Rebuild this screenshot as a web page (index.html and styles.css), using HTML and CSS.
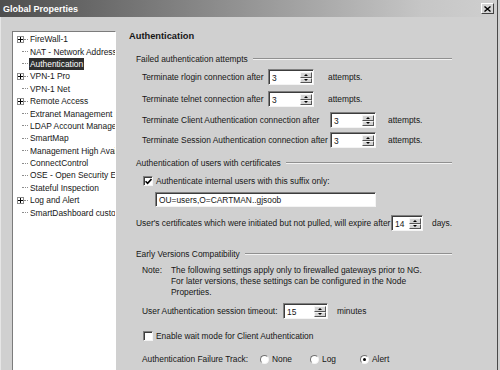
FILE: index.html
```html
<!DOCTYPE html>
<html lang="en">
<head>
  <meta charset="UTF-8">
  <meta name="viewport" content="width=device-width, initial-scale=1.0">
  <title>Global Properties</title>
  <link rel="stylesheet" href="styles.css">
</head>
<body>

  <div class="window">
    <div class="titlebar">
      <span class="title">Global Properties</span>
      <span class="close-btn">
        <svg width="7" height="6" viewBox="0 0 7 6"><path d="M0.5 0.5L6.5 5.5M6.5 0.5L0.5 5.5" stroke="#000" stroke-width="1.4"/></svg>
      </span>
    </div>

    <div class="dialog-body">
      <!-- Category tree -->
      <ul class="tree">
        <li><span class="twig"><span class="expander"></span></span><span class="node">FireWall-1</span></li>
        <li><span class="twig leaf"></span><span class="node">NAT - Network Address Translation</span></li>
        <li><span class="twig leaf"></span><span class="node selected">Authentication</span></li>
        <li><span class="twig"><span class="expander"></span></span><span class="node">VPN-1 Pro</span></li>
        <li><span class="twig leaf"></span><span class="node">VPN-1 Net</span></li>
        <li><span class="twig"><span class="expander"></span></span><span class="node">Remote Access</span></li>
        <li><span class="twig leaf"></span><span class="node">Extranet Management Interface</span></li>
        <li><span class="twig leaf"></span><span class="node">LDAP Account Management</span></li>
        <li><span class="twig leaf"></span><span class="node">SmartMap</span></li>
        <li><span class="twig leaf"></span><span class="node">Management High Availability</span></li>
        <li><span class="twig leaf"></span><span class="node">ConnectControl</span></li>
        <li><span class="twig leaf"></span><span class="node">OSE - Open Security Extension</span></li>
        <li><span class="twig leaf"></span><span class="node">Stateful Inspection</span></li>
        <li><span class="twig"><span class="expander"></span></span><span class="node">Log and Alert</span></li>
        <li><span class="twig leaf"></span><span class="node">SmartDashboard customization</span></li>
      </ul>

      <!-- Authentication page -->
      <div class="panel">
        <h1 class="page-title">Authentication</h1>

        <div class="group mt7">Failed authentication attempts</div>

        <div class="field-row mt2">
          <span class="lbl lbl-short">Terminate rlogin connection after</span>
          <span class="spin"><span class="val">3</span><span class="spin-btns"><span class="up"></span><span class="down"></span></span></span>
          <span class="unit">attempts.</span>
        </div>
        <div class="field-row mt6">
          <span class="lbl lbl-short">Terminate telnet connection after</span>
          <span class="spin"><span class="val">3</span><span class="spin-btns"><span class="up"></span><span class="down"></span></span></span>
          <span class="unit">attempts.</span>
        </div>
        <div class="field-row mt5">
          <span class="lbl lbl-long">Terminate Client Authentication connection after</span>
          <span class="spin"><span class="val">3</span><span class="spin-btns"><span class="up"></span><span class="down"></span></span></span>
          <span class="unit unit-near">attempts.</span>
        </div>
        <div class="field-row mt4">
          <span class="lbl lbl-long">Terminate Session Authentication connection after</span>
          <span class="spin"><span class="val">3</span><span class="spin-btns"><span class="up"></span><span class="down"></span></span></span>
          <span class="unit unit-near">attempts.</span>
        </div>

        <div class="group mt7">Authentication of users with certificates</div>

        <div class="field-row mt2">
          <span class="checkbox">
            <svg width="7" height="7" viewBox="0 0 7 7"><path d="M0.5 3.2L2.6 5.4L6.5 1" fill="none" stroke="#000" stroke-width="1.6"/></svg>
          </span>
          <span class="check-label">Authenticate internal users with this suffix only:</span>
        </div>
        <div class="text-row mt3">
          <span class="textbox">OU=users,O=CARTMAN..gjsoob</span>
        </div>
        <div class="field-row outdent mt8">
          <span class="lbl lbl-expire">User's certificates which were initiated but not pulled, will expire after</span>
          <span class="spin spin-small"><span class="val">14</span><span class="spin-btns"><span class="up"></span><span class="down"></span></span></span>
          <span class="unit unit-tight">days.</span>
        </div>

        <div class="group mt15">Early Versions Compatibility</div>

        <div class="note mt3">
          <span class="note-head">Note:</span>
          <span class="note-text">The following settings apply only to firewalled gateways prior to NG.<br>For later versions, these settings can be configured in the Node<br>Properties.</span>
        </div>

        <div class="field-row mt5">
          <span class="lbl lbl-timeout">User Authentication session timeout:</span>
          <span class="spin spin-timeout"><span class="val">15</span><span class="spin-btns"><span class="up"></span><span class="down"></span></span></span>
          <span class="unit unit-tight">minutes</span>
        </div>

        <div class="field-row mt9">
          <span class="checkbox"></span>
          <span class="check-label">Enable wait mode for Client Authentication</span>
        </div>

        <div class="field-row mt7">
          <span class="lbl lbl-track">Authentication Failure Track:</span>
          <span class="option"><span class="radio"></span>None</span>
          <span class="option"><span class="radio"></span>Log</span>
          <span class="option"><span class="radio checked"></span>Alert</span>
        </div>
      </div>
    </div>
  </div>

</body>
</html>
```

FILE: styles.css
```css
* {
  box-sizing: border-box;
}

body {
  margin: 0;
  background-color: #d0d0d0;
  font-family: "Liberation Sans", Arial, sans-serif;
  font-size: 8.4px;
  color: #161616;
}

.window {
  width: 498px;
  height: 370px;
  overflow: hidden;
  border-right: 1px solid #4a4a4a;
  background-color: #d0d0d0;
}

/* Title bar */
.titlebar {
  height: 17px;
  display: flex;
  align-items: center;
  justify-content: space-between;
  padding: 0 3px 0 3px;
  background: linear-gradient(to right, #4e4e4e 0%, #8e8e8e 45%, #c6c6c6 85%, #cfcfcf 100%);
}

.title {
  color: #fff;
  font-weight: bold;
  font-size: 9px;
}

.close-btn {
  width: 13px;
  height: 11px;
  display: flex;
  align-items: center;
  justify-content: center;
  background-color: #d4d4d4;
  border: 1px solid;
  border-color: #fff #404040 #404040 #fff;
}

.dialog-body {
  display: flex;
  border-left: 1px solid #e6e6e6;
}

/* Tree */
.tree {
  list-style: none;
  margin: 14px 0 0 11px;
  padding: 1px 0 0 0;
  width: 104px;
  height: 360px;
  background-color: #fff;
  border: 1px solid;
  border-color: #7c7c7c #fff #fff #7c7c7c;
  overflow: hidden;
  white-space: nowrap;
}

.tree li {
  display: flex;
  align-items: center;
  height: 12.4px;
}

.twig {
  display: flex;
  align-items: center;
  flex: none;
  width: 16px;
  height: 100%;
}

.twig::after {
  content: "";
  flex: 1;
  margin-right: 1px;
  border-top: 1px dotted #8c8c8c;
}

.twig.leaf::after {
  margin-left: 9px;
}

.expander {
  width: 7px;
  height: 7px;
  margin-left: 4px;
  border: 1px solid #8c8c8c;
  background:
    linear-gradient(#000, #000) center / 5px 1px no-repeat,
    linear-gradient(#000, #000) center / 1px 5px no-repeat,
    #fff;
}

.node {
  padding: 0 1px;
  line-height: 12px;
}

.node.selected {
  background-color: #2e2e2e;
  color: #fff;
}

/* Right panel */
.panel {
  margin-left: 13px;
  width: 323px;
  padding-top: 11px;
}

.page-title {
  margin: 0;
  height: 16px;
  display: flex;
  align-items: center;
  font-size: 9.3px;
  font-weight: bold;
}

.group {
  height: 16px;
  margin-left: 7px;
  display: flex;
  align-items: center;
}

.group::after {
  content: "";
  flex: 1;
  margin-left: 5px;
  border-top: 1px solid #909090;
  border-bottom: 1px solid #f2f2f2;
}

.field-row {
  height: 16px;
  margin-left: 13px;
  display: flex;
  align-items: center;
}

.field-row.outdent {
  margin-left: 7px;
}

.lbl {
  flex: none;
}

.lbl-short { width: 126px; }
.lbl-long { width: 188px; }
.lbl-expire { width: 255px; }
.lbl-timeout { width: 141px; }
.lbl-track { width: 118px; }

/* Spin box */
.spin {
  width: 46px;
  height: 16px;
  display: flex;
  align-items: stretch;
  background-color: #fff;
  border: 1px solid;
  border-color: #808080 #f4f4f4 #f4f4f4 #808080;
  box-shadow: inset 1px 1px 0 #3c3c3c;
  padding: 2px 1px 1px 2px;
}

.spin-small { width: 35px; }
.spin-timeout { width: 45px; }

.val {
  flex: 1;
  display: flex;
  align-items: center;
  padding-left: 1px;
}

.spin-btns {
  width: 12px;
  display: flex;
  flex-direction: column;
}

.up, .down {
  flex: 1;
  display: flex;
  align-items: center;
  justify-content: center;
  background-color: #d4d4d4;
  border: 1px solid;
  border-color: #f4f4f4 #555 #555 #f4f4f4;
}

.up::before, .down::before {
  content: "";
  border-left: 2px solid transparent;
  border-right: 2px solid transparent;
}

.up::before { border-bottom: 2px solid #000; }
.down::before { border-top: 2px solid #000; }

.unit {
  margin-left: 14px;
}

.unit-near { margin-left: 12px; }
.unit-tight { margin-left: 9px; }

/* Checkbox */
.checkbox {
  width: 10px;
  height: 10px;
  margin-left: 1px;
  margin-right: 3px;
  display: flex;
  align-items: center;
  justify-content: center;
  background-color: #fff;
  border: 1px solid;
  border-color: #808080 #f4f4f4 #f4f4f4 #808080;
  box-shadow: inset 1px 1px 0 #3c3c3c;
}

.text-row {
  margin-left: 26px;
  height: 15px;
  display: flex;
}

.textbox {
  width: 221px;
  height: 15px;
  display: flex;
  align-items: center;
  padding-left: 3px;
  background-color: #fff;
  border: 1px solid;
  border-color: #808080 #f4f4f4 #f4f4f4 #808080;
  box-shadow: inset 1px 1px 0 #3c3c3c;
}

/* Note */
.note {
  margin-left: 13px;
  display: flex;
  line-height: 11px;
}

.note-head {
  width: 29px;
  flex: none;
}

/* Radio options */
.option {
  width: 50px;
  display: flex;
  align-items: center;
}

.radio {
  width: 9px;
  height: 9px;
  margin-right: 3px;
  border-radius: 50%;
  background-color: #fff;
  border: 1px solid;
  border-color: #707070 #f4f4f4 #f4f4f4 #707070;
  display: flex;
  align-items: center;
  justify-content: center;
}

.radio.checked::before {
  content: "";
  width: 3px;
  height: 3px;
  border-radius: 50%;
  background-color: #000;
}

.mt2 { margin-top: 2px; }
.mt3 { margin-top: 3px; }
.mt4 { margin-top: 4px; }
.mt5 { margin-top: 5px; }
.mt6 { margin-top: 6px; }
.mt7 { margin-top: 7px; }
.mt8 { margin-top: 8px; }
.mt9 { margin-top: 9px; }
.mt15 { margin-top: 15px; }
```
